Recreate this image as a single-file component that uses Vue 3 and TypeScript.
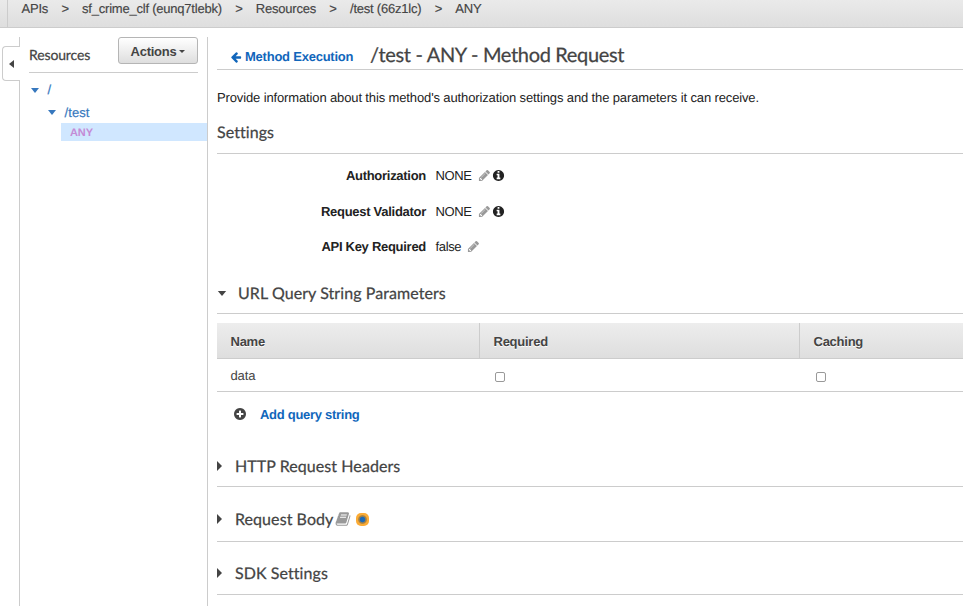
<script setup lang="ts">
interface Setting {
  label: string
  value: string
  info: boolean
}

const crumbs: string[] = ['APIs', 'sf_crime_clf (eunq7tlebk)', 'Resources', '/test (66z1lc)', 'ANY']

const settings: Setting[] = [
  { label: 'Authorization', value: 'NONE', info: true },
  { label: 'Request Validator', value: 'NONE', info: true },
  { label: 'API Key Required', value: 'false', info: false },
]

const circle =
  'M1664 896q0 209-103 385.5t-279.5 279.5-385.5 103-385.5-103-279.5-279.5-103-385.5 103-385.5 279.5-279.5 385.5-103 385.5 103 279.5 279.5 103 385.5z'

const icons = {
  arrow:
    'M1664 896v128q0 53-32.5 90.5t-84.5 37.5h-704l293 294q38 36 38 90t-38 90l-75 76q-37 37-90 37-52 0-91-37l-651-652q-37-37-37-90 0-52 37-91l651-650q38-38 91-38 52 0 90 38l75 74q38 38 38 91t-38 91l-293 293h704q52 0 84.5 37.5t32.5 90.5z',
  pencil:
    'M491 1536l91-91-235-235-91 91v107h128v128h107zm523-928q0-22-22-22-10 0-17 7l-542 542q-7 7-7 17 0 22 22 22 10 0 17-7l542-542q7-7 7-17zm-54-192l416 416-832 832h-416v-416zm683 96q0 53-37 90l-166 166-416-416 166-165q36-38 90-38 53 0 91 38l235 234q37 39 37 91z',
  info:
    'M1152 1376v-160q0-14-9-23t-23-9h-96v-512q0-14-9-23t-23-9h-320q-14 0-23 9t-9 23v160q0 14 9 23t23 9h96v320h-96q-14 0-23 9t-9 23v160q0 14 9 23t23 9h448q14 0 23-9t9-23zM1024 480v-160q0-14-9-23t-23-9h-192q-14 0-23 9t-9 23v160q0 14 9 23t23 9h192q14 0 23-9t9-23z' +
    circle,
  plus:
    'M1344 960v-128q0-26-19-45t-45-19h-256v-256q0-26-19-45t-45-19h-128q-26 0-45 19t-19 45v256h-256q-26 0-45 19t-19 45v128q0 26 19 45t45 19h256v256q0 26 19 45t45 19h128q26 0 45-19t19-45v-256h256q26 0 45-19t19-45z' +
    circle,
  book:
    'M1703 478q40 57 18 129l-275 906q-19 64-76.5 107.5t-122.5 43.5h-923q-77 0-148.5-53.5t-99.5-131.5q-24-67-2-127 0-4 3-27t4-37q1-8-3-21.5t-3-19.5q2-11 8-21t16.5-23.5 16.5-23.5q23-38 45-91.5t30-91.5q3-10 .5-30t-.5-28q3-11 17-28t17-23q21-36 42-92t25-90q1-9-2.5-32t.5-28q4-13 22-30.5t22-22.5q19-26 42.5-84.5t27.5-96.5q1-8-3-25.5t-2-26.5q2-8 9-18t18-23 17-21q8-12 16.5-30.5t15-35 16-36 19.5-32 26.5-23.5 36-11.5 47.5 5.5l-1 3q38-9 51-9h761q74 0 114 56t18 130l-274 906q-36 119-71.5 153.5t-128.5 34.5h-869q-27 0-38 15-11 16-1 43 24 70 144 70h923q29 0 56-15.5t35-41.5l300-987q7-22 5-57 38 15 59 43zm-1064 2q-4 13 2 22.5t20 9.5h608q13 0 25.5-9.5t16.5-22.5l21-64q4-13-2-22.5t-20-9.5h-608q-13 0-25.5 9.5t-16.5 22.5zm-83 256q-4 13 2 22.5t20 9.5h608q13 0 25.5-9.5t16.5-22.5l21-64q4-13-2-22.5t-20-9.5h-608q-13 0-25.5 9.5t-16.5 22.5z',
}
</script>

<template>
  <div class="page">
    <header class="topbar">
      <nav class="crumbs">
        <template v-for="(c, i) in crumbs" :key="c">
          <span v-if="i" class="sep">&gt;</span>
          <span>{{ c }}</span>
        </template>
      </nav>
    </header>

    <div class="body">
      <div class="gutter">
        <div class="collapse">
          <svg class="tri-left" viewBox="0 0 5 8"><path d="M5 0v8L0 4z" /></svg>
        </div>
        <div class="rail"></div>
      </div>

      <aside class="sidebar">
        <div class="side-head">
          <h3>Resources</h3>
          <button class="actions">Actions<svg class="caret" viewBox="0 0 6 3"><path d="M0 0h6L3 3z" /></svg></button>
        </div>
        <ul class="tree">
          <li class="root"><svg class="node" viewBox="0 0 8 5"><path d="M0 0h8L4 5z" /></svg>/</li>
          <li class="child"><svg class="node" viewBox="0 0 8 5"><path d="M0 0h8L4 5z" /></svg>/test</li>
          <li class="method">ANY</li>
        </ul>
      </aside>

      <main class="main">
        <div class="title-row">
          <a class="back"><svg class="ic-arrow" viewBox="0 0 1792 1792"><path :d="icons.arrow" /></svg>Method Execution</a>
          <h1>/test - ANY - Method Request</h1>
        </div>
        <p class="intro">Provide information about this method's authorization settings and the parameters it can receive.</p>

        <h2 class="settings-title">Settings</h2>
        <dl class="settings">
          <div v-for="s in settings" :key="s.label" class="setting">
            <dt>{{ s.label }}</dt>
            <dd>
              <span>{{ s.value }}</span>
              <svg class="ic-pencil" viewBox="0 0 1792 1792"><path :d="icons.pencil" /></svg>
              <svg v-if="s.info" class="ic-info" viewBox="0 0 1792 1792"><path fill-rule="evenodd" :d="icons.info" /></svg>
            </dd>
          </div>
        </dl>

        <h2 class="section open"><svg class="tri-down" viewBox="0 0 10 6"><path d="M0 0h10L5 6z" /></svg>URL Query String Parameters</h2>
        <div class="table">
          <div class="row head">
            <div class="cell">Name</div>
            <div class="cell">Required</div>
            <div class="cell">Caching</div>
          </div>
          <div class="row data">
            <div class="cell">data</div>
            <div class="cell"><span class="check"></span></div>
            <div class="cell"><span class="check"></span></div>
          </div>
        </div>
        <div class="add">
          <svg class="ic-plus" viewBox="0 0 1792 1792"><path fill-rule="evenodd" :d="icons.plus" /></svg>
          <a>Add query string</a>
        </div>

        <h2 class="section headers"><svg class="tri-right" viewBox="0 0 5 10"><path d="M0 0v10L5 5z" /></svg>HTTP Request Headers</h2>
        <h2 class="section request-body">
          <svg class="tri-right" viewBox="0 0 5 10"><path d="M0 0v10L5 5z" /></svg>Request Body
          <svg class="ic-book" viewBox="0 0 1792 1792"><path :d="icons.book" /></svg>
          <span class="beacon"></span>
        </h2>
        <h2 class="section sdk"><svg class="tri-right" viewBox="0 0 5 10"><path d="M0 0v10L5 5z" /></svg>SDK Settings</h2>
      </main>
    </div>
  </div>
</template>

<style>
body {
  margin: 0;
  background: #fff;
  overflow: hidden;
}
</style>

<style scoped>
* {
  box-sizing: border-box;
}
.page {
  width: 963px;
  height: 606px;
  display: flex;
  flex-direction: column;
  overflow: hidden;
  background: #fff;
  color: #444;
  font: 13px/18px 'Liberation Sans', Arial, sans-serif;
  letter-spacing: -0.13px;
  text-rendering: geometricPrecision;
}
svg {
  display: block;
  flex: none;
  fill: currentColor;
}
h1, h2, h3 {
  margin: 0;
  font-family: Lato, sans-serif;
  font-weight: 400;
  color: #444;
  white-space: nowrap;
  -webkit-text-stroke: 0.25px #444;
}
.topbar {
  flex: none;
  height: 28px;
  padding-left: 7px;
  background: linear-gradient(#eaeaea, #dedede);
  border-bottom: 1px solid #ccc;
}
.crumbs {
  height: 27px;
  display: flex;
  padding-left: 13.5px;
  border-left: 1px solid #ccc;
  letter-spacing: -0.22px;
  -webkit-text-stroke: 0.15px #444;
}
.sep {
  width: 34px;
  text-align: center;
}
.body {
  flex: 1;
  display: flex;
  padding-top: 9px;
  min-height: 0;
}
.gutter {
  width: 20px;
  display: flex;
  flex-direction: column;
}
.gutter::before {
  content: '';
  height: 9px;
  border-right: 1px solid #ccc;
}
.collapse {
  height: 35px;
  margin-left: 2px;
  display: flex;
  align-items: center;
  padding-left: 6px;
  border: 1px solid #ccc;
  border-right: 0;
  border-radius: 4px 0 0 4px;
}
.tri-left {
  width: 5px;
  height: 8px;
}
.rail {
  flex: 1;
  border-right: 1px solid #ccc;
}
.sidebar {
  width: 188px;
  border-right: 1px solid #ccc;
}
.side-head {
  height: 36px;
  margin: 0 9px;
  display: flex;
  justify-content: space-between;
  border-bottom: 1px solid #ccc;
}
.side-head h3 {
  font-size: 14px;
  line-height: 36px;
}
.actions {
  width: 80px;
  height: 27px;
  display: flex;
  align-items: center;
  justify-content: center;
  gap: 3px;
  padding: 2px 0 0;
  border: 1px solid #b5b5b5;
  border-radius: 3px;
  background: linear-gradient(#fff, #dedede);
  color: #444;
  font: bold 13px/18px 'Liberation Sans', Arial, sans-serif;
  letter-spacing: -0.25px;
}
.caret {
  width: 6px;
  height: 3px;
}
.tree {
  list-style: none;
  margin: 0;
  padding: 6px 0 0;
  color: #3778be;
  -webkit-text-stroke: 0.2px #3778be;
}
.tree li {
  display: flex;
  align-items: center;
}
.node {
  width: 8px;
  height: 5px;
  margin-right: 8.5px;
}
.root {
  height: 22px;
  padding-left: 11px;
}
.child {
  height: 23px;
  padding-left: 28px;
  letter-spacing: 0.1px;
}
.tree .method {
  height: 18px;
  margin: -1px 0 0 41px;
  padding: 1px 0 0 9px;
  background: #d0e7ff;
  color: #c48bd6;
  font-size: 11px;
  font-weight: bold;
  -webkit-text-stroke: 0;
}
.main {
  flex: 1;
  min-width: 0;
  padding-left: 9px;
}
.title-row {
  height: 33px;
  display: flex;
  align-items: flex-start;
  padding-left: 13px;
  border-bottom: 1px solid #ccc;
}
.back {
  width: 140px;
  display: flex;
  align-items: center;
  gap: 3px;
  padding-top: 11px;
  color: #1166bb;
  font-weight: bold;
  letter-spacing: -0.23px;
  white-space: nowrap;
}
.ic-arrow {
  width: 12px;
  height: 12px;
  margin-top: -1px;
}
h1 {
  font-size: 20px;
  line-height: 37px;
  letter-spacing: -0.33px;
}
.intro {
  margin: 19px 0 0;
  color: #222;
  white-space: nowrap;
}
h2 {
  font-size: 16px;
  line-height: 20px;
  letter-spacing: 0.07px;
}
.settings-title {
  height: 47px;
  padding-top: 16px;
  border-bottom: 1px solid #ccc;
}
.settings {
  height: 127px;
  margin: 0;
  padding-top: 13px;
  color: #222;
}
.setting {
  display: flex;
  height: 35.6px;
}
dt {
  width: 209px;
  text-align: right;
  font-weight: bold;
  letter-spacing: -0.28px;
}
dd {
  margin: 0 0 0 9.5px;
  height: 18px;
  display: flex;
  align-items: center;
  letter-spacing: -0.35px;
}
.ic-pencil {
  width: 13px;
  height: 13px;
  margin: -1px 0 0 6px;
  color: #999;
}
.ic-info {
  width: 13px;
  height: 13px;
  margin: -1px 0 0 1px;
}
.section {
  display: flex;
  align-items: center;
  border-bottom: 1px solid #ccc;
}
.open {
  height: 33px;
  padding-bottom: 6px;
}
.tri-down {
  width: 10px;
  height: 5px;
  margin: 0 11px 2px 0;
}
.tri-right {
  width: 5px;
  height: 10px;
  margin: 0 13px 2px 0;
}
.table {
  margin-top: 9px;
}
.row {
  display: grid;
  grid-template-columns: 263px 320px 1fr;
  border-bottom: 1px solid #ccc;
}
.cell {
  display: flex;
  align-items: center;
  padding: 2px 0 0 13.5px;
}
.head {
  height: 36px;
  background: linear-gradient(#ededed, #dedede);
  font-weight: bold;
  text-shadow: 0 1px 0 #fff;
  letter-spacing: -0.25px;
}
.head .cell {
  border-right: 1px solid #ccc;
}
.head .cell:last-child {
  border-right: 0;
}
.data {
  height: 33px;
}
.check {
  width: 10px;
  height: 10px;
  margin: 2px 0 0 1.5px;
  border: 1px solid #999;
  border-radius: 2px;
  background: #fff;
}
.data .cell:last-child .check {
  margin-left: 2.5px;
}
.add {
  height: 46px;
  display: flex;
  align-items: center;
  gap: 13px;
  padding-left: 16px;
  color: #444;
}
.add a {
  color: #1166bb;
  font-weight: bold;
  letter-spacing: -0.28px;
}
.ic-plus {
  width: 14px;
  height: 14px;
  margin-top: -2px;
}
.headers {
  height: 49px;
  padding-top: 10px;
}
.request-body {
  height: 55px;
  padding-top: 12px;
}
.sdk {
  height: 53px;
  padding-top: 12px;
}
.ic-book {
  width: 16px;
  height: 16px;
  margin: 0 0 2px 2px;
  color: #999;
}
.beacon {
  width: 13px;
  height: 13px;
  margin: 0 0 2px 5px;
  border-radius: 5px;
  background: radial-gradient(circle, #1b69b8 0 2.3px, #a08048 3.2px 3.8px, #fbab35 4.8px);
}
</style>
